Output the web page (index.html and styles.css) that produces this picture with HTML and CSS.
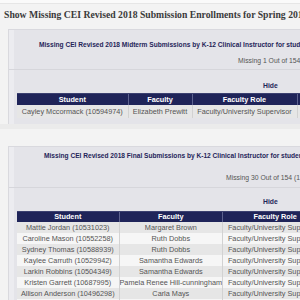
FILE: index.html
```html
<!DOCTYPE html>
<html lang="en">
<head>
  <meta charset="UTF-8" />
  <title>Missing CEI Submissions</title>
  <link rel="stylesheet" href="styles.css">
</head>
<body>
  <div class="top-strip"></div>
  <h1 class="page-title">Show Missing CEI Revised 2018 Submission Enrollments for Spring 2019</h1>

  <section class="panel panel-midterm">
    <div class="panel-title">Missing CEI Revised 2018 Midterm Submissions by K-12 Clinical Instructor for students</div>
    <div class="panel-summary">Missing 1 Out of 154 (0.65%)</div>
    <div class="panel-body">
      <div class="hide-row"><a href="#">Hide</a></div>
      <table class="report">
        <colgroup>
          <col style="width: 111px">
          <col style="width: 64px">
          <col style="width: 105px">
          <col style="width: 100px">
        </colgroup>
        <thead>
          <tr><th>Student</th><th>Faculty</th><th>Faculty Role</th><th>Placement</th></tr>
        </thead>
        <tbody>
          <tr><td>Cayley Mccormack (10594974)</td><td>Elizabeth Prewitt</td><td>Faculty/University Supervisor</td><td>Elementary</td></tr>
        </tbody>
      </table>
    </div>
  </section>

  <div class="panel-gap"></div>

  <section class="panel panel-final">
    <div class="panel-title">Missing CEI Revised 2018 Final Submissions by K-12 Clinical Instructor for students</div>
    <div class="panel-summary">Missing 30 Out of 154 (19.48%)</div>
    <div class="panel-body">
      <div class="hide-row"><a href="#">Hide</a></div>
      <table class="report">
        <colgroup>
          <col style="width: 102px">
          <col style="width: 103px">
          <col style="width: 105px">
          <col style="width: 100px">
        </colgroup>
        <thead>
          <tr><th>Student</th><th>Faculty</th><th>Faculty Role</th><th>Placement</th></tr>
        </thead>
        <tbody>
          <tr><td>Mattie Jordan (10531023)</td><td>Margaret Brown</td><td>Faculty/University Supervisor</td><td>Elementary</td></tr>
          <tr><td>Caroline Mason (10552258)</td><td>Ruth Dobbs</td><td>Faculty/University Supervisor</td><td>Elementary</td></tr>
          <tr><td>Sydney Thomas (10588939)</td><td>Ruth Dobbs</td><td>Faculty/University Supervisor</td><td>Elementary</td></tr>
          <tr><td>Kaylee Carruth (10529942)</td><td>Samantha Edwards</td><td>Faculty/University Supervisor</td><td>Elementary</td></tr>
          <tr><td>Larkin Robbins (10504349)</td><td>Samantha Edwards</td><td>Faculty/University Supervisor</td><td>Elementary</td></tr>
          <tr><td>Kristen Garrett (10687995)</td><td>Pamela Renee Hill-cunningham</td><td>Faculty/University Supervisor</td><td>Elementary</td></tr>
          <tr><td>Allison Anderson (10496298)</td><td>Carla Mays</td><td>Faculty/University Supervisor</td><td>Elementary</td></tr>
          <tr><td>Emily Walker (10543310)</td><td>Carla Mays</td><td>Faculty/University Supervisor</td><td>Elementary</td></tr>
        </tbody>
      </table>
    </div>
  </section>
</body>
</html>
```

FILE: styles.css
```css
:root {
  --navy: #1f2459;
  --page-bg: #f3f3f3;
  --panel-bg: #e4e4e9;
  --cell-text: #555;
}

* {
  box-sizing: border-box;
  margin: 0;
  padding: 0;
}

body {
  background: var(--page-bg);
  font-family: 'Liberation Sans', Arial, sans-serif;
  width: 300px;
  height: 300px;
  overflow: hidden;
}

.top-strip {
  height: 4px;
  background: #fafafa;
  border-bottom: 1px solid #e6e6e6;
}

.page-title {
  font-family: 'Liberation Serif', 'Times New Roman', serif;
  font-size: 9.7px;
  font-weight: bold;
  color: #3a3a3a;
  white-space: nowrap;
  line-height: 14px;
  padding: 4px 0 0 4px;
  height: 25px;
}

.panel {
  width: 560px;
  margin-left: 8px;
  background: var(--panel-bg);
  border-left: 1px solid #d9d9de;
  border-top: 1px solid #d9d9de;
  box-shadow: inset 5px 0 0 #ececf0;
}

.panel-title {
  font-size: 6.6px;
  font-weight: bold;
  color: var(--navy);
  line-height: 10px;
  white-space: nowrap;
}

.panel-summary {
  font-size: 6.8px;
  color: #555;
  line-height: 10px;
  white-space: nowrap;
  border-bottom: 1px solid #d6d6db;
}

.panel-midterm .panel-title {
  padding: 10px 0 0 30px;
}

.panel-midterm .panel-summary {
  padding: 6px 0 3px 229px;
}

.panel-final .panel-title {
  padding: 4px 0 0 35px;
}

.panel-final .panel-summary {
  padding: 12px 0 4px 217px;
}

.panel-body {
  padding: 0 0 6px 8px;
}

.hide-row {
  line-height: 10px;
  padding: 8px 0 2px 246px;
}

.panel-final .hide-row {
  padding: 6px 0 4px 246px;
}

.hide-row a {
  font-size: 6.8px;
  font-weight: bold;
  color: var(--navy);
  text-decoration: none;
}

.report {
  border-collapse: collapse;
  table-layout: fixed;
  font-size: 7.3px;
}

.report th {
  background: var(--navy);
  color: #fff;
  font-weight: bold;
  height: 11px;
  border-left: 1px solid #5d628f;
  border-top: 1px solid #3b4070;
  text-align: center;
  white-space: nowrap;
}

.report th:first-child {
  border-left: none;
}

.report td {
  height: 11px;
  color: var(--cell-text);
  text-align: center;
  white-space: nowrap;
  overflow: hidden;
  border-left: 1px solid #d2d2d2;
}

.report td:first-child {
  border-left: none;
}

.report tbody tr:nth-child(odd) {
  background: #e6e6e6;
}

.report tbody tr:nth-child(even) {
  background: #f6f6f6;
}

.panel-midterm .report td {
  height: 13px;
}

.panel-gap {
  height: 22px;
  border-top: 5px solid #ebebeb;
}
```
